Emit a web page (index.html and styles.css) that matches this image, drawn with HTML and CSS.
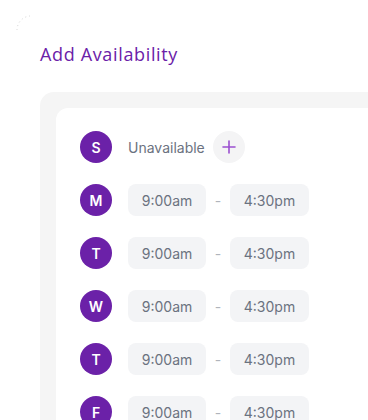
FILE: index.html
```html
<!DOCTYPE html>
<html>
<head>
<meta charset="utf-8">
<link rel="stylesheet" href="styles.css">
</head>
<body>
<div class="frame">
<svg class="spinner" width="40" height="40" viewBox="0 0 40 40">
  <path d="M17 30 A14 14 0 0 1 30 16" fill="none" stroke="#d4d4d4" stroke-width="1" stroke-dasharray="1 3"/>
</svg>
<div class="page">
  <h1 class="title">Add Availability</h1>
  <div class="outer">
    <div class="card">
      <div class="row">
        <div class="day">S</div>
        <span class="unavail">Unavailable</span>
        <button class="add"><svg width="14" height="14" viewBox="0 0 14 14"><path d="M7 1v12M1 7h12" stroke="#9b4fd0" stroke-width="1.6" stroke-linecap="round"/></svg></button>
      </div>
      <div class="row">
        <div class="day">M</div>
        <div class="pill">9:00am</div><span class="dash">-</span><div class="pill">4:30pm</div>
      </div>
      <div class="row">
        <div class="day">T</div>
        <div class="pill">9:00am</div><span class="dash">-</span><div class="pill">4:30pm</div>
      </div>
      <div class="row">
        <div class="day">W</div>
        <div class="pill">9:00am</div><span class="dash">-</span><div class="pill">4:30pm</div>
      </div>
      <div class="row">
        <div class="day">T</div>
        <div class="pill">9:00am</div><span class="dash">-</span><div class="pill">4:30pm</div>
      </div>
      <div class="row">
        <div class="day">F</div>
        <div class="pill">9:00am</div><span class="dash">-</span><div class="pill">4:30pm</div>
      </div>
    </div>
  </div>
</div>
</div>
</body>
</html>
```
FILE: styles.css
```css
html, body {
  margin: 0;
  padding: 0;
  background: #ffffff;
}
body {
  font-family: Inter, "Noto Sans", sans-serif;
}
.frame {
  position: relative;
  width: 368px;
  height: 420px;
  overflow: hidden;
}
.spinner {
  position: absolute;
  left: 0;
  top: 0;
}
.page {
  padding: 40px 0 0 40px;
}
.title {
  margin: 0;
  font-family: "Open Sans", Inter, sans-serif;
  font-weight: 400;
  font-size: 18px;
  line-height: 28px;
  color: #6b21a8;
  letter-spacing: 0.65px;
}
.outer {
  margin-top: 24px;
  margin-right: -40px;
  background: #f5f5f5;
  border-radius: 14px;
  padding: 16px 0 0 16px;
}
.card {
  background: #ffffff;
  border-radius: 12px;
  padding: 23px 0 40px 24px;
  display: flex;
  flex-direction: column;
  gap: 21px;
}
.row {
  display: flex;
  align-items: center;
  height: 32px;
}
.day {
  width: 32px;
  height: 32px;
  border-radius: 50%;
  background: #6b21a8;
  color: #fff;
  font-weight: 600;
  font-size: 14px;
  display: flex;
  align-items: center;
  justify-content: center;
  margin-right: 16px;
  flex: none;
}
.unavail {
  font-size: 14px;
  color: #6b7280;
  margin-right: 8px;
}
.add {
  width: 32px;
  height: 32px;
  border-radius: 50%;
  border: none;
  background: #f4f4f5;
  display: flex;
  align-items: center;
  justify-content: center;
  padding: 0;
}
.pill {
  height: 32px;
  box-sizing: border-box;
  padding: 0 14px;
  background: #f3f4f6;
  border-radius: 8px;
  font-size: 14px;
  color: #6b7280;
  display: flex;
  align-items: center;
  justify-content: center;
  width: 78px;
}
.pill + .dash + .pill {
  width: 79px;
}
.dash {
  width: 24px;
  text-align: center;
  color: #b0b4bb;
  font-size: 14px;
}
```
